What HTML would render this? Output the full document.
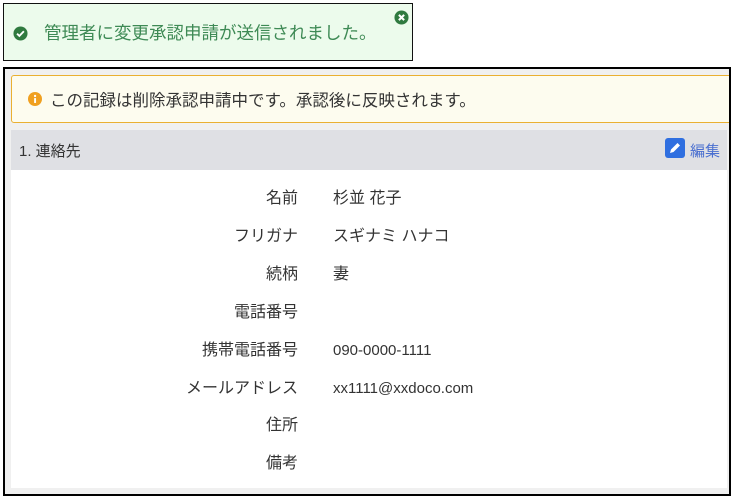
<!DOCTYPE html><html><head><meta charset="utf-8"><style>
body{margin:0;width:732px;height:498px;background:#fff;font-family:"Liberation Sans","Noto Sans CJK JP",sans-serif;position:relative;overflow:hidden;color:#222}
.toast{position:absolute;left:3px;top:3px;width:408px;height:56px;border:1px solid #111;background:#ecfbec;}
.toast .t{position:absolute;left:40px;top:16px;font-size:17.5px;color:#3e8a55}
.main{position:absolute;left:3px;top:67px;width:724px;height:425px;border:2px solid #000;background:#f0f0f0;overflow:hidden}
.alert{position:absolute;left:6px;top:6px;width:730px;height:46px;border:1px solid #eab032;background:#fdfcef;border-radius:3px}
.alert .t{position:absolute;left:38px;top:11px;font-size:16.5px;color:#333}
.hdr{position:absolute;left:6px;top:61px;width:716px;height:40px;background:#dfe0e4}
.hdr .t{position:absolute;left:8px;top:10px;font-size:15px;color:#333}
.hdr .e{position:absolute;left:679px;top:10px;font-size:15px;color:#4a6fd0}
.panel{position:absolute;left:6px;top:101px;width:716px;height:318px;background:#fff}
.row{position:absolute;left:0;width:716px;font-size:16px;color:#333;height:20px;line-height:20px}
.l{position:absolute;right:429px;white-space:nowrap;top:0}
.v{position:absolute;left:322px;white-space:nowrap;top:0}
</style></head><body>
<div class="toast">
<svg style="position:absolute;left:9px;top:22px" width="15" height="15" viewBox="0 0 16 16"><circle cx="8" cy="8" r="7.5" fill="#2f7a3f"/><path d="M4.3 8.2l2.5 2.4 4.8-5" stroke="#fff" stroke-width="2" fill="none"/></svg>
<div class="t">管理者に変更承認申請が送信されました。</div>
<svg style="position:absolute;left:390px;top:6px" width="15" height="15" viewBox="0 0 16 16"><circle cx="8" cy="8" r="7.5" fill="#2f7a3f"/><path d="M5.2 5.2l5.6 5.6M10.8 5.2l-5.6 5.6" stroke="#fff" stroke-width="2.2"/></svg>
</div>
<div class="main">
<div class="alert">
<svg style="position:absolute;left:16px;top:16px" width="14" height="14" viewBox="0 0 16 16"><circle cx="8" cy="8" r="8" fill="#f0a020"/><rect x="7" y="7" width="2.2" height="5.5" fill="#fff"/><circle cx="8.1" cy="4.5" r="1.3" fill="#fff"/></svg>
<div class="t">この記録は削除承認申請中です。承認後に反映されます。</div>
</div>
<div class="hdr"><div class="t">1. 連絡先</div>
<svg style="position:absolute;left:654px;top:8px" width="20" height="20" viewBox="0 0 20 20"><rect x="0" y="0" width="20" height="20" rx="3" fill="#2f6fe0"/><path d="M5 15l1-3.5 6.5-6.5 2.5 2.5-6.5 6.5z" fill="#fff"/></svg>
<div class="e">編集</div></div>
<div class="panel">
<div class="row" style="top:19px"><span class="l">名前</span><span class="v">杉並 花子</span></div>
<div class="row" style="top:57px"><span class="l">フリガナ</span><span class="v">スギナミ ハナコ</span></div>
<div class="row" style="top:95px"><span class="l">続柄</span><span class="v">妻</span></div>
<div class="row" style="top:133px"><span class="l">電話番号</span></div>
<div class="row" style="top:171px"><span class="l">携帯電話番号</span><span class="v" style="font-size:15px">090-0000-1111</span></div>
<div class="row" style="top:209px"><span class="l">メールアドレス</span><span class="v" style="font-size:15px">xx1111@xxdoco.com</span></div>
<div class="row" style="top:246px"><span class="l">住所</span></div>
<div class="row" style="top:284px"><span class="l">備考</span></div>
</div>
</div>
</body></html>
